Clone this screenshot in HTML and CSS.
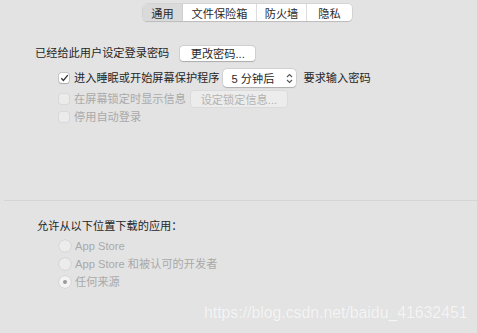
FILE: index.html
```html
<!DOCTYPE html>
<html lang="zh">
<head>
<meta charset="utf-8">
<link rel="stylesheet" href="styles.css">
</head>
<body>
<div class="window">
  <div class="tabs">
    <div class="tab tab-sel t1">通用</div>
    <div class="tab t2">文件保险箱</div>
    <div class="tab t3">防火墙</div>
    <div class="tab t4">隐私</div>
  </div>

  <div class="row row1">
    <span class="label">已经给此用户设定登录密码</span>
    <span class="btn btn-change">更改密码...</span>
  </div>

  <div class="row row2 indent">
    <span class="check checked">
      <svg width="9" height="8" viewBox="0 0 9 8"><path d="M1.3 4.3 L3.4 6.5 L7.8 1.2" fill="none" stroke="#333" stroke-width="1.3"/></svg>
    </span>
    <span class="label">进入睡眠或开始屏幕保护程序</span>
    <span class="popup">
      <span class="popup-text">5 分钟后</span>
      <svg class="chev" width="7" height="11" viewBox="0 0 7 11"><path d="M1 4 L3.5 1.5 L6 4 M1 7 L3.5 9.5 L6 7" fill="none" stroke="#555" stroke-width="1.1"/></svg>
    </span>
    <span class="label">要求输入密码</span>
  </div>

  <div class="row row3 indent">
    <span class="check disabled"></span>
    <span class="label dim">在屏幕锁定时显示信息</span>
    <span class="btn btn-dis">设定锁定信息...</span>
  </div>

  <div class="row row4 indent">
    <span class="check disabled"></span>
    <span class="label dim">停用自动登录</span>
  </div>

  <div class="sep"></div>

  <div class="heading">允许从以下位置下载的应用：</div>
  <div class="radio-row"><span class="radio"></span><span class="label dim">App Store</span></div>
  <div class="radio-row"><span class="radio"></span><span class="label dim">App Store 和被认可的开发者</span></div>
  <div class="radio-row"><span class="radio on"><span class="dot"></span></span><span class="label dim">任何来源</span></div>

  <div class="watermark">https://blog.csdn.net/baidu_41632451</div>
</div>
</body>
</html>
```

FILE: styles.css
```css
html, body {
  margin: 0;
  padding: 0;
}
body {
  background: #e3e3e3;
  font-family: "Liberation Sans", "Noto Sans CJK SC", sans-serif;
  font-size: 11.2px;
  color: #262626;
  width: 477px;
  height: 333px;
  overflow: hidden;
}
.window {
  position: relative;
  width: 477px;
  height: 333px;
  padding-top: 4px;
  box-sizing: border-box;
}
.tabs {
  display: flex;
  margin-left: 143px;
  width: 209px;
  height: 17px;
  background: #ffffff;
  border-radius: 4px;
  box-shadow: 0 0 0 0.5px rgba(0,0,0,0.12), 0 1px 1px rgba(0,0,0,0.12);
  overflow: hidden;
}
.tab {
  display: flex;
  align-items: center;
  justify-content: center;
  height: 17px;
  font-size: 11.2px;
  color: #2a2a2a;
  border-right: 1px solid #dcdcdc;
  box-sizing: border-box;
}
.tab:last-child { border-right: none; }
.t1 { width: 40px; }
.t2 { width: 74px; }
.t3 { width: 50px; }
.t4 { width: 45px; }
.tab-sel {
  background: #dadada;
  border-right-color: #cfcfcf;
}
.row {
  display: flex;
  align-items: center;
  height: 18px;
}
.row1 {
  margin-top: 23px;
  padding-left: 35px;
}
.row2 { margin-top: 7px; height: 18px; }
.row3 { margin-top: 3px; height: 18px; }
.row4 { height: 17px; }
.indent { padding-left: 59px; }
.label {
  white-space: nowrap;
  line-height: 14px;
}
.dim { color: #a9a9a9; }
.btn {
  display: flex;
  align-items: center;
  justify-content: center;
  height: 15px;
  border-radius: 3px;
  background: #ffffff;
  box-shadow: 0 0 0 0.5px rgba(0,0,0,0.14), 0 0.5px 1px rgba(0,0,0,0.18);
  white-space: nowrap;
}
.btn-change {
  width: 75px;
  margin-left: 11px;
  color: #2a2a2a;
}
.btn-dis {
  width: 96px;
  height: 16px;
  margin-left: 5px;
  background: #ececec;
  color: #b3b3b3;
  box-shadow: 0 0 0 0.5px rgba(0,0,0,0.07);
}
.check {
  display: flex;
  align-items: center;
  justify-content: center;
  width: 10px;
  height: 10px;
  border-radius: 2px;
  background: #ffffff;
  box-shadow: 0 0 0 0.5px rgba(0,0,0,0.22), 0 0.5px 1px rgba(0,0,0,0.15);
  margin-right: 5px;
  flex: none;
}
.check.disabled {
  background: #ebebeb;
  box-shadow: 0 0 0 0.5px rgba(0,0,0,0.09);
}
.popup {
  display: flex;
  align-items: center;
  justify-content: space-between;
  width: 73px;
  height: 18px;
  margin-left: 4px;
  margin-right: 7px;
  padding: 0 3px 0 8px;
  box-sizing: border-box;
  background: #ffffff;
  border-radius: 4px;
  box-shadow: 0 0 0 0.5px rgba(0,0,0,0.13), 0 0.5px 1px rgba(0,0,0,0.18);
}
.popup-text { white-space: nowrap; }
.chev { flex: none; }
.sep {
  margin-top: 75px;
  margin-left: 4px;
  height: 1px;
  background: #d4d4d4;
}
.heading {
  margin-top: 17px;
  padding-left: 37px;
  height: 16px;
  line-height: 16px;
  white-space: nowrap;
}
.radio-row {
  display: flex;
  align-items: center;
  height: 18px;
  padding-left: 59px;
}
.heading + .radio-row { margin-top: 3px; }
.radio {
  display: flex;
  align-items: center;
  justify-content: center;
  width: 12px;
  height: 12px;
  border-radius: 50%;
  background: #ececec;
  box-shadow: 0 0 0 0.5px rgba(0,0,0,0.12);
  margin-right: 4px;
  flex: none;
}
.radio.on { background: #f3f3f3; }
.dot {
  width: 4px;
  height: 4px;
  border-radius: 50%;
  background: #9a9a9a;
}
.watermark {
  position: absolute;
  left: 204px;
  top: 304px;
  font-family: "Liberation Sans", sans-serif;
  font-size: 15.8px;
  color: rgba(255,255,255,0.75);
  text-shadow: 0 0 1px rgba(0,0,0,0.06);
  white-space: nowrap;
}
```
